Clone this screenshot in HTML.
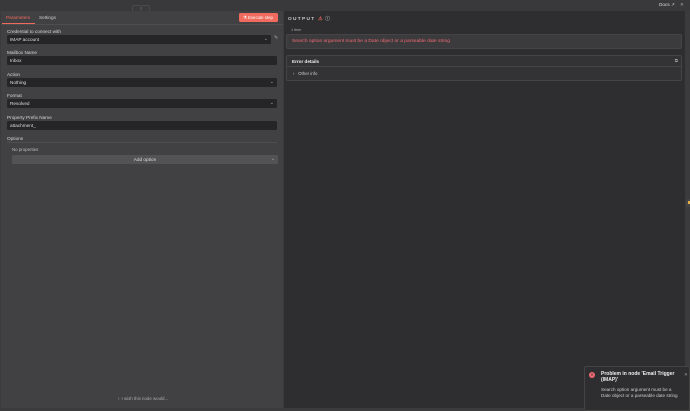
<!DOCTYPE html>
<html><head><style>
*{box-sizing:border-box;margin:0;padding:0}
body{width:690px;height:411px;background:#3b3b3d;font-family:"Liberation Sans",sans-serif;position:relative;overflow:hidden;color:#ddd}
.top{position:absolute;left:0;top:0;width:690px;height:11px;background:#39393b}
.left{position:absolute;left:1px;top:11px;width:282px;height:397px;background:#414143}
.right{position:absolute;left:284px;top:11px;width:401px;height:397px;background:#2e2e30}
.a{position:absolute}
.lbl{position:absolute;left:6px;font-size:4.7px;color:#d6d6d6}
.inp{position:absolute;left:6px;width:270px;height:9px;background:#252527;border-radius:1.5px;font-size:4.7px;color:#ddd;padding:2px 3px}
.chev{position:absolute;right:3px;top:1px;font-size:5px;color:#aaa}
</style></head><body>
<div class="top"></div>
<div class="a" style="left:132px;top:5px;width:18px;height:7px;background:#3a3a3c;border:1px solid #4a4a4c;border-bottom:none;border-radius:2px 2px 0 0"></div>
<div class="a" style="left:140px;top:6px;font-size:4px;color:#888">≡</div>
<div class="a" style="left:659px;top:2px;font-size:4.7px;color:#ddd">Docs ↗</div>
<div class="a" style="left:680px;top:2px;font-size:4.5px;color:#aaa">✕</div>
<div class="left">
 <div class="a" style="left:5px;top:4px;font-size:4.7px;color:#f06a5e">Parameters</div>
 <div class="a" style="left:1px;top:12px;width:33px;height:1px;background:#f06a5e"></div>
 <div class="a" style="left:38px;top:4px;font-size:4.7px;color:#ccc">Settings</div>
 <div class="a" style="left:0;top:13px;width:282px;height:1px;background:#4e4e50"></div>
 <div class="a" style="left:238px;top:2px;width:39px;height:9px;background:#f06a5e;border-radius:1.5px;font-size:4.3px;color:#fff;padding:2.2px 0 0 4px">⚗ Execute step</div>
 <div class="lbl" style="top:18px">Credential to connect with</div>
 <div class="inp" style="top:24px;width:264px">IMAP account<span class="chev">⌄</span></div>
 <div class="a" style="left:273px;top:24px;font-size:5px;color:#aaa">✎</div>
 <div class="lbl" style="top:39px">Mailbox Name</div>
 <div class="inp" style="top:45px">Inbox</div>
 <div class="lbl" style="top:61px">Action</div>
 <div class="inp" style="top:67px">Nothing<span class="chev">⌄</span></div>
 <div class="lbl" style="top:82px">Format</div>
 <div class="inp" style="top:88px">Resolved<span class="chev">⌄</span></div>
 <div class="lbl" style="top:104px">Property Prefix Name</div>
 <div class="inp" style="top:110px">attachment_</div>
 <div class="lbl" style="top:125px">Options</div>
 <div class="a" style="left:6px;top:131px;width:270px;height:1px;background:#4e4e50"></div>
 <div class="a" style="left:11px;top:136px;font-size:4.4px;color:#bbb">No properties</div>
 <div class="a" style="left:11px;top:144px;width:266px;height:9px;background:#535355;border-radius:1.5px;font-size:4.7px;color:#ddd;text-align:center;padding-top:2px">Add option<span class="chev">⌄</span></div>
 <div class="a" style="left:116px;top:385px;font-size:4.4px;color:#aaa">♀ I wish this node would...</div>
</div>
<div class="right">
 <div class="a" style="left:4px;top:4px;font-size:4.8px;color:#ccc;letter-spacing:1.3px;font-weight:bold">OUTPUT <span style="color:#f06a5e;letter-spacing:0">⚠</span> <span style="color:#999;letter-spacing:0">ⓘ</span></div>
 <div class="a" style="left:7px;top:17px;font-size:3.8px;color:#aaa">1 item</div>
 <div class="a" style="left:2px;top:23px;width:396px;height:15px;background:#3b3b3d;border:1px solid #444;border-radius:2px;font-size:4.9px;color:#f06a72;padding:4px 0 0 5px">Search option argument must be a Date object or a parseable date string</div>
 <div class="a" style="left:2px;top:44px;width:396px;height:26px;border:1px solid #444;border-radius:2px;background:#333335">
  <div class="a" style="left:0;top:0;width:394px;height:11px;border-bottom:1px solid #444;font-size:4.6px;color:#eee;padding:3px 0 0 5px;font-weight:bold">Error details<span style="position:absolute;right:3px;top:2px;color:#aaa;font-weight:normal">⧉</span></div>
  <div class="a" style="left:6px;top:15px;font-size:4.4px;color:#ccc">›&nbsp;&nbsp;&nbsp;Other info</div>
 </div>
</div>
<div class="a" style="left:686px;top:199px;width:4px;height:8px;background:#444;border-radius:2px 0 0 2px"></div>
<div class="a" style="left:688px;top:201px;width:2px;height:3px;background:#e8b04a"></div>
<div class="a" style="left:584px;top:366px;width:106px;height:45px;background:#2e2e30;border:1px solid #444;border-radius:2px"></div>
<div class="a" style="left:589px;top:372px;width:6px;height:6px;border-radius:50%;background:#f06a72;font-size:4px;color:#2e2e30;text-align:center;line-height:6px">✕</div>
<div class="a" style="left:601px;top:371px;font-size:5px;color:#eee;font-weight:bold;line-height:6px;width:82px">Problem in node 'Email Trigger (IMAP)'</div>
<div class="a" style="left:684px;top:372px;font-size:4.3px;color:#999">✕</div>
<div class="a" style="left:601px;top:387px;font-size:4.6px;color:#ccc;line-height:6px;width:80px">Search option argument must be a Date object or a parseable date string</div>
</body></html>
